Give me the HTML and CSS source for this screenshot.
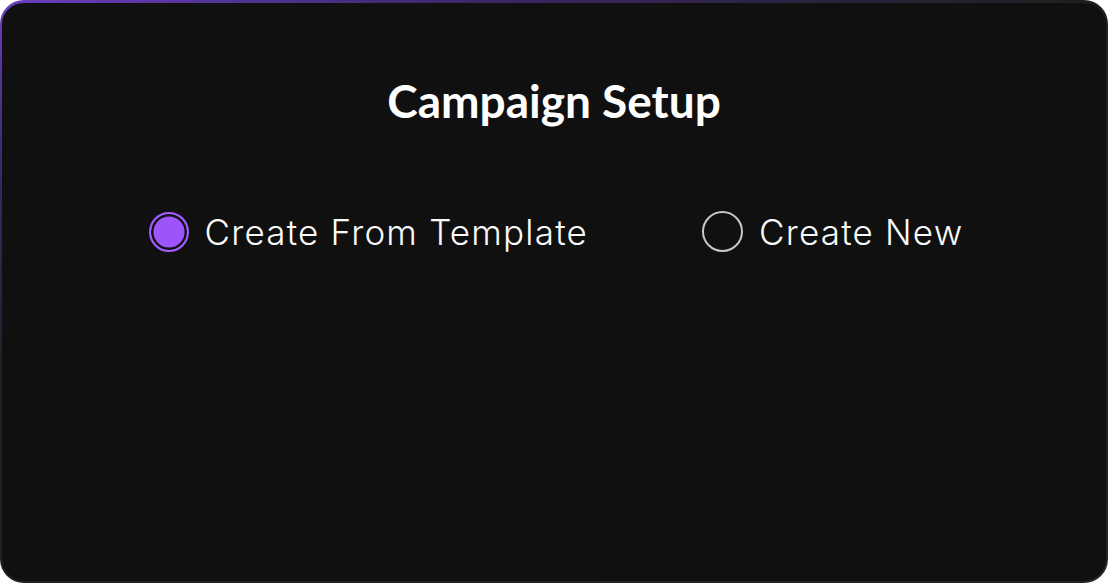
FILE: index.html
```html
<!DOCTYPE html>
<html lang="en">
	<head>
		<title>Campaign Setup</title>
		<link rel="stylesheet" href="styles.css">
	</head>
	<body>
		<div class="card">
			<h1 class="title">Campaign Setup</h1>
			<div class="options">
				<label class="option">
					<span class="radio checked"></span>
					<span class="label">Create From Template</span>
				</label>
				<label class="option">
					<span class="radio"></span>
					<span class="label">Create New</span>
				</label>
			</div>
		</div>
	</body>
</html>
```

FILE: styles.css
```css
*, *:after, *:before { box-sizing: border-box; }

html, body {
	margin: 0;
	background: #fff;
}

/*************************************
Card with gradient border
**************************************/

.card {
	width: 1108px;
	height: 583px;
	border: 2px solid transparent;
	border-top-width: 3px;
	border-radius: 24px;
	background:
		linear-gradient(#101010, #101010) padding-box,
		linear-gradient(160deg, #6a3fc0 0%, #3a2766 18%, #1f1f1f 40%, #232323 100%) border-box;
	color: #fff;
	display: flex;
	flex-direction: column;
	align-items: center;
}

.title {
	margin: 70px 0 0;
	font-family: 'Lato', Arial, sans-serif;
	font-weight: 700;
	font-size: 46px;
	line-height: 56px;
}

/*************************************
Radio options
**************************************/

.options {
	display: flex;
	gap: 114px;
	margin-top: 82px;
	padding-left: 4px;
}

.option {
	display: flex;
	align-items: center;
	gap: 16px;
	cursor: pointer;
}

.radio {
	flex: none;
	width: 41px;
	height: 41px;
	border-radius: 50%;
	border: 2.5px solid #c8c8c8;
}

.radio.checked {
	width: 40px;
	height: 40px;
	border: 2px solid #a05cff;
	background: #9d55fb;
	box-shadow: inset 0 0 0 2.5px #141018;
}

.label {
	font-family: 'Inter', 'Noto Sans', sans-serif;
	font-weight: 300;
	font-size: 35px;
	line-height: 40px;
	letter-spacing: 1.2px;
	color: #fafafa;
}
```
